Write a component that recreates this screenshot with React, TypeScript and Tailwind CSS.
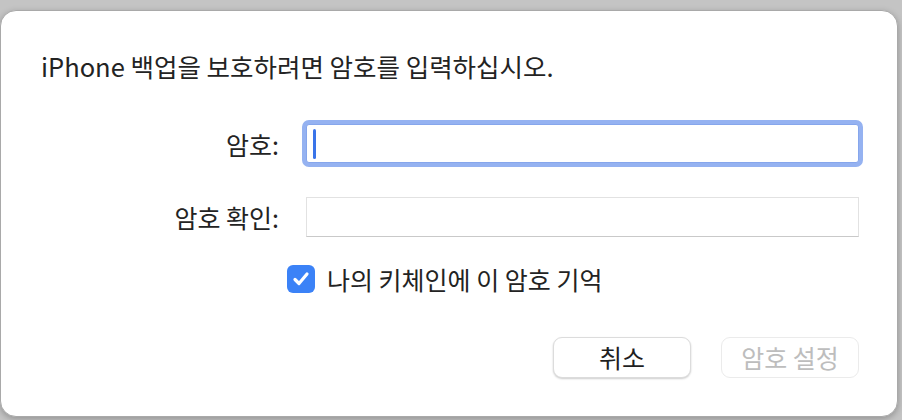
import React from 'react';

const font = { fontFamily: '"Noto Sans CJK KR", "Noto Sans", sans-serif' };

function Check() {
  return (
    <div className="flex h-[28px] w-[28px] items-center justify-center rounded-[6px] bg-[#3b82f7]">
      <svg width="20" height="20" viewBox="0 0 20 20" fill="none">
        <path d="M4 10.5 L8 14.5 L16 5" stroke="white" strokeWidth="3.2" strokeLinecap="round" strokeLinejoin="round" />
      </svg>
    </div>
  );
}

export default function App() {
  return (
    <div className="h-[420px] w-[902px] overflow-hidden bg-[#c4c4c4] pt-[10px]" style={font}>
      <div className="flex h-[407px] w-[898px] flex-col rounded-[16px] border border-[#a9a9a9] bg-white pl-[40px] pr-[38px] pt-[40px] shadow-[0_2px_6px_rgba(0,0,0,0.25)]">
        <div className="text-[25.5px] leading-[30px] text-[#232323]">iPhone 백업을 보호하려면 암호를 입력하십시오.</div>

        <div className="mt-[43px] grid grid-cols-[238px_553px] items-center gap-x-[27px] gap-y-[34px]">
          <div className="text-right text-[25px] leading-[30px] text-[#232323]">암호:</div>
          <div className="relative h-[39px] rounded-[3px] border border-[#86a6ec] bg-white shadow-[0_0_0_4px_#95b2f1]">
            <div className="absolute left-[6px] top-[4px] h-[30px] w-[3px] rounded-full bg-[#3a74e9]" />
          </div>
          <div className="text-right text-[25px] leading-[30px] text-[#232323]">암호 확인:</div>
          <div className="h-[40px] border border-[#e2e2e2] border-b-[#c9c9c9] bg-white" />
        </div>

        <div className="ml-[246px] mt-[27px] flex items-center gap-[12px]">
          <Check />
          <span className="text-[25px] leading-[30px] text-[#232323]">나의 키체인에 이 암호 기억</span>
        </div>

        <div className="mt-[43px] flex justify-end gap-[30px]">
          <button className="flex h-[41px] w-[138px] items-center justify-center rounded-[9px] border border-[#dcdcdc] bg-white text-[25px] text-[#1f1f1f] shadow-[0_1px_2px_rgba(0,0,0,0.2)]">
            취소
          </button>
          <button className="flex h-[41px] w-[138px] items-center justify-center rounded-[9px] border border-[#ebebeb] bg-white text-[25px] text-[#bdbdbd]">
            암호 설정
          </button>
        </div>
      </div>
    </div>
  );
}
